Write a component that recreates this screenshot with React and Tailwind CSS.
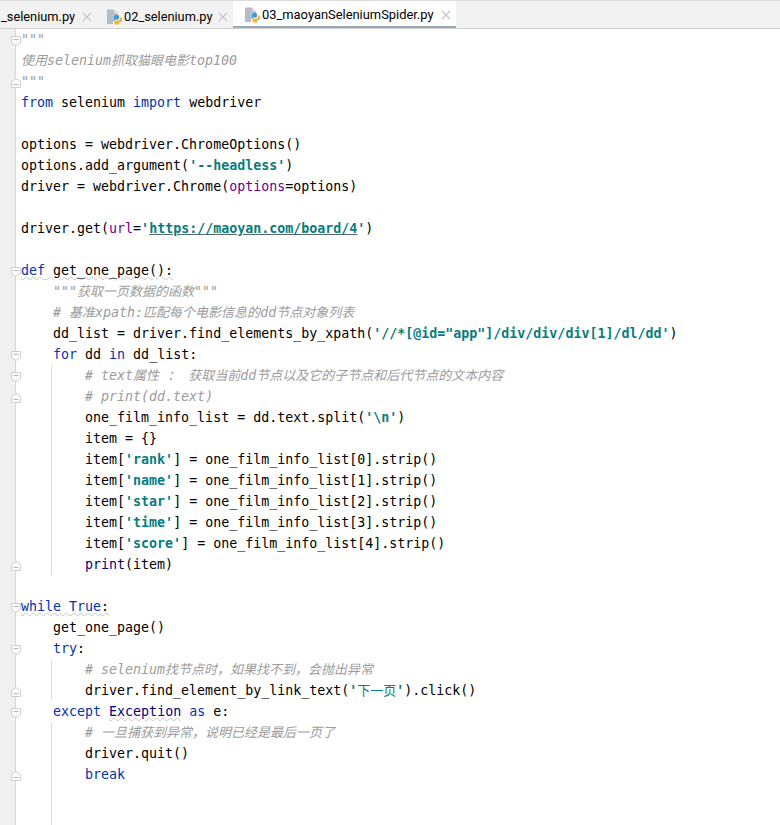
import React from 'react';

const KW = 'text-[#0033b3]';
const ST = 'text-[#067d7d] font-bold';
const CM = 'text-[#9c9c9c] italic';
const CLS = 'text-[#000080]';
const WAVY = 'underline decoration-wavy decoration-[#c8c8c8] decoration-1';

const s = (text, cls) => ({ text, cls });

// fold: 'open' is a marker with its point down, 'close' has its point up
const lines = [
  { fold: 'open', parts: [s('"""', CM)] },
  { parts: [s('使用selenium抓取猫眼电影top100', CM)] },
  { fold: 'close', parts: [s('"""', CM)] },
  { parts: [s('from', KW), s(' selenium '), s('import', KW), s(' webdriver')] },
  {},
  { parts: [s('options = webdriver.ChromeOptions()')] },
  { parts: [s('options.add_argument('), s("'--headless'", ST), s(')')] },
  { parts: [s('driver = webdriver.Chrome('), s('options', 'text-[#660099]'), s('=options)')] },
  {},
  { parts: [s('driver.get('), s('url', 'text-[#660099]'), s('='), s("'", ST), s('https://maoyan.com/board/4', ST + ' underline decoration-[#5a6a6a]'), s("'", ST), s(')')] },
  {},
  { fold: 'open', wavy: true, parts: [s('def', KW), s(' get_one_page():')] },
  { parts: [s('    '), s('"""获取一页数据的函数"""', CM)] },
  { parts: [s('    '), s('# 基准xpath:匹配每个电影信息的dd节点对象列表', CM)] },
  { parts: [s('    dd_list = driver.find_elements_by_xpath('), s(`'//*[@id="app"]/div/div/div[1]/dl/dd'`, ST), s(')')] },
  { fold: 'open', parts: [s('    '), s('for', KW), s(' dd '), s('in', KW), s(' dd_list:')] },
  { guide: true, fold: 'open', parts: [s('        '), s('# text属性 ： 获取当前dd节点以及它的子节点和后代节点的文本内容', CM)] },
  { guide: true, fold: 'close', parts: [s('        '), s('# print(dd.text)', CM)] },
  { guide: true, parts: [s('        one_film_info_list = dd.text.split('), s("'\\n'", ST), s(')')] },
  { guide: true, parts: [s('        item = {}')] },
  { guide: true, parts: [s('        item['), s("'rank'", ST), s('] = one_film_info_list[0].strip()')] },
  { guide: true, parts: [s('        item['), s("'name'", ST), s('] = one_film_info_list[1].strip()')] },
  { guide: true, parts: [s('        item['), s("'star'", ST), s('] = one_film_info_list[2].strip()')] },
  { guide: true, parts: [s('        item['), s("'time'", ST), s('] = one_film_info_list[3].strip()')] },
  { guide: true, parts: [s('        item['), s("'score'", ST), s('] = one_film_info_list[4].strip()')] },
  { guide: true, fold: 'close', parts: [s('        '), s('print', CLS), s('(item)')] },
  {},
  { fold: 'open', wavy: true, parts: [s('while', KW), s(' '), s('True', KW), s(':')] },
  { parts: [s('    get_one_page()')] },
  { fold: 'open', parts: [s('    '), s('try', KW), s(':')] },
  { guide: true, parts: [s('        '), s('# selenium找节点时，如果找不到，会抛出异常', CM)] },
  { guide: true, fold: 'close', parts: [s('        driver.find_element_by_link_text('), s("'", ST), s('下一页', 'text-[#067d7d]'), s("'", ST), s(').click()')] },
  { fold: 'open', parts: [s('    '), s('except', KW), s(' '), s('Exception', CLS + ' ' + WAVY), s(' '), s('as', KW), s(' e:')] },
  { guide: true, parts: [s('        '), s('# 一旦捕获到异常，说明已经是最后一页了', CM)] },
  { guide: true, parts: [s('        driver.quit()')] },
  { guide: true, fold: 'close', parts: [s('        '), s('break', KW)] },
  { guide: true },
  { guide: true },
];

// chinese runs sit at 13px in the editor, slightly under the latin size
const Chunk = ({ text }) =>
  text.split(/([\u3000-\u9fff\uff00-\uffef]+)/).map((run, i) =>
    i % 2 ? <span key={i} className="text-[13px]">{run}</span> : run
  );

const FoldMark = ({ type }) => (
  <svg className="absolute left-[-10px] top-[6px]" width="10" height="12" viewBox="0 0 10 12">
    <path
      d={type === 'open' ? 'M0.5 1.5H9.5V7.5L5 10.5L0.5 7.5Z' : 'M0.5 10.5H9.5V4.5L5 1.5L0.5 4.5Z'}
      fill="#fcfcfc"
      stroke="#cfcfcf"
    />
    <path d={type === 'open' ? 'M2.5 4.5H7.5' : 'M2.5 7.5H7.5'} stroke="#b8b8b8" />
  </svg>
);

const PyIcon = () => (
  <svg width="17" height="16" viewBox="0 0 17 16">
    <path d="M1 0.5H8L12 4.5V6H7V15H1Z" fill="#b4bcc4" />
    <path d="M8 0.5V4.5H12Z" fill="#d8dde2" />
    <path d="M7.5 10V7.5C7.5 6.5 8.2 6 9.5 6H11.5C12.6 6 13 6.6 13 7.5V9.5C13 10.2 12.5 10.5 11.8 10.5H9.5C8.8 10.5 8.5 11 8.5 11.5V12H7.5C7.2 11.5 7.5 10.5 7.5 10Z" fill="#3d9bd6" />
    <path d="M16 8.5V11.5C16 12.5 15.3 13 14.2 13H13.5V14C13.5 15 12.8 15.5 11.6 15.5H10C9 15.5 8.5 15 8.5 14V12.5C8.5 11.7 9 11.5 9.7 11.5H12.4C13.2 11.5 14 11 14 10V8.5Z" fill="#f2b534" />
  </svg>
);

const Tab = ({ name, active, icon, className, textClass, closeClass }) => (
  <div className={`flex h-[28px] items-center ${active ? 'bg-white border-b-[3px] border-[#9ca7b8] pt-[2px]' : 'pt-[3px]'} ${className}`}>
    {icon && <span className="mr-[1px]"><PyIcon /></span>}
    <span className={`text-black whitespace-nowrap ${textClass}`}>{name}</span>
    <svg className={closeClass} width="10" height="10" viewBox="0 0 10 10">
      <path d="M1 1L9 9M9 1L1 9" stroke="#c4c4c4" strokeWidth="1.1" />
    </svg>
  </div>
);

export default function App() {
  return (
    <div className="h-[825px] w-[780px] overflow-hidden bg-white font-['Roboto',sans-serif]">
      <div className="flex h-[29px] items-start overflow-hidden border-t border-[#dcdcdc] border-b border-b-[#cfcfcf] bg-[#f2f2f2]">
        <Tab name="_selenium.py" className="w-[106px] pl-[1px]" textClass="text-[12.8px]" closeClass="ml-[7px]" />
        <Tab name="02_selenium.py" icon className="w-[127px]" textClass="text-[12.8px]" closeClass="ml-[6px]" />
        <Tab name="03_maoyanSeleniumSpider.py" icon active className="w-[223px] pl-[11px]" textClass="text-[12.9px]" closeClass="ml-[7px]" />
      </div>
      <div className="flex h-[796px]">
        <div className="w-[16px] shrink-0 border-r border-[#d8d8d8] bg-[#f0f0f0]" />
        <div className="flex-1 pl-[5px] font-['DejaVu_Sans_Mono','Noto_Sans_CJK_SC',monospace] text-[13.3px] text-black">
          {lines.map((line, i) => (
            <div key={i} className="relative h-[21px] leading-[21px] whitespace-pre">
              {line.guide && <div className="absolute left-[30px] top-0 h-[21px] w-px bg-[#dcdcdc]" />}
              {line.fold && <FoldMark type={line.fold} />}
              <span className={line.wavy ? WAVY : ''}>
                {(line.parts || []).map((p, j) => (
                  <span key={j} className={p.cls}><Chunk text={p.text} /></span>
                ))}
              </span>
            </div>
          ))}
        </div>
      </div>
    </div>
  );
}
